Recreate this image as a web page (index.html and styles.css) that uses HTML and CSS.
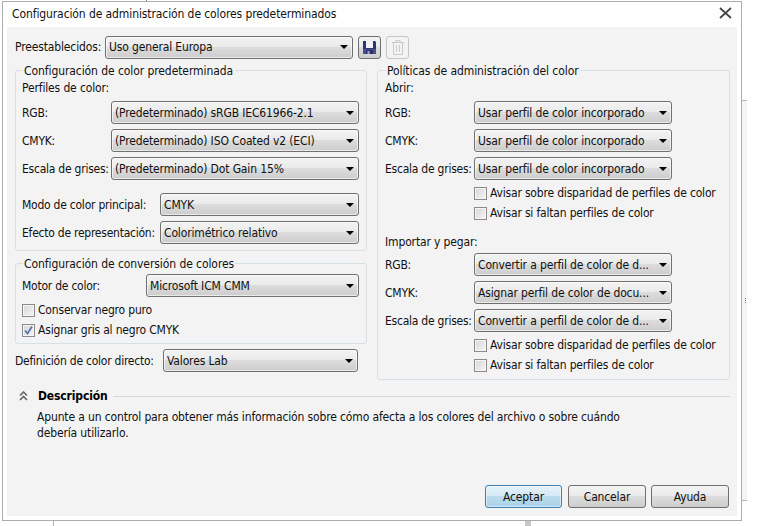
FILE: index.html
```html
<!DOCTYPE html>
<html lang="es">
<head>
<meta charset="utf-8">
<title>Configuración de administración de colores predeterminados</title>
<link rel="stylesheet" href="styles.css">
</head>
<body>
<div class="bg-tick bg-tick-a"></div>
<div class="bg-tick bg-tick-b"></div>
<div class="bg-tick bg-tick-c"></div>
<div class="bg-side"></div>
<div class="bg-dots"></div>
<div class="dialog">
  <div class="titlebar">
    <span class="title">Configuración de administración de colores predeterminados</span>
    <svg class="close" width="13" height="12" viewBox="0 0 13 12"><path d="M1 1l11 10M12 1L1 11" stroke="#444" stroke-width="1.700" fill="none"/></svg>
  </div>
  <div class="panel">
    <div class="preset-row">
      <span class="lbl-preset">Preestablecidos:</span>
      <div class="select select-preset"><span>Uso general Europa</span><i class="arrow"></i></div>
      <div class="tool tool-save">
        <svg width="13" height="13" viewBox="0 0 13 13"><path d="M0 0h12l1 1v12H0z" fill="#2d3572"/><path d="M0 8h13v5H0z" fill="#4a4f8a"/><path d="M3 0h7v7H3z" fill="#f2f3f8"/><path d="M3 9h7v4H3z" fill="#2a3068"/><path d="M4.500 10h2v3h-2z" fill="#a8abc8"/></svg>
      </div>
      <div class="tool tool-trash">
        <svg width="12" height="15" viewBox="0 0 12 15" fill="none" stroke="#c6caca"><path d="M0 2.500h12M4 2V.5h4V2"/><path d="M1.500 2.500v12h9v-12"/><path d="M4.500 5v7M7.500 5v7"/></svg>
      </div>
    </div>
    <div class="columns">
      <div class="col-left">
        <section class="group group-default">
          <div class="legend">Configuración de color predeterminada</div>
          <div class="sub">Perfiles de color:</div>
          <div class="row"><span class="lbl lbl-89">RGB:</span><div class="select"><span>(Predeterminado) sRGB IEC61966-2.1</span><i class="arrow"></i></div></div>
          <div class="row"><span class="lbl lbl-89">CMYK:</span><div class="select"><span>(Predeterminado) ISO Coated v2 (ECI)</span><i class="arrow"></i></div></div>
          <div class="row"><span class="lbl lbl-89">Escala de grises:</span><div class="select"><span>(Predeterminado) Dot Gain 15%</span><i class="arrow"></i></div></div>
          <div class="row row-spaced"><span class="lbl lbl-138">Modo de color principal:</span><div class="select"><span>CMYK</span><i class="arrow"></i></div></div>
          <div class="row"><span class="lbl lbl-138">Efecto de representación:</span><div class="select"><span>Colorimétrico relativo</span><i class="arrow"></i></div></div>
        </section>
        <section class="group group-convert">
          <div class="legend">Configuración de conversión de colores</div>
          <div class="row row-motor"><span class="lbl lbl-124">Motor de color:</span><div class="select"><span>Microsoft ICM CMM</span><i class="arrow"></i></div></div>
          <label class="check"><i class="box"></i>Conservar negro puro</label>
          <label class="check"><i class="box"><svg width="11" height="11" viewBox="0 0 11 11"><path d="M2 5.500l2.500 3L9 1.500" fill="none" stroke="#5b72b4" stroke-width="1.800"/></svg></i>Asignar gris al negro CMYK</label>
        </section>
        <div class="row row-spot"><span class="lbl lbl-148">Definición de color directo:</span><div class="select"><span>Valores Lab</span><i class="arrow"></i></div></div>
      </div>
      <section class="group col-right">
        <div class="legend">Políticas de administración del color</div>
        <div class="sub">Abrir:</div>
        <div class="row"><span class="lbl lbl-89">RGB:</span><div class="select select-198"><span>Usar perfil de color incorporado</span><i class="arrow"></i></div></div>
        <div class="row"><span class="lbl lbl-89">CMYK:</span><div class="select select-198"><span>Usar perfil de color incorporado</span><i class="arrow"></i></div></div>
        <div class="row"><span class="lbl lbl-89">Escala de grises:</span><div class="select select-198"><span>Usar perfil de color incorporado</span><i class="arrow"></i></div></div>
        <label class="check check-indent check-first"><i class="box"></i>Avisar sobre disparidad de perfiles de color</label>
        <label class="check check-indent"><i class="box"></i>Avisar si faltan perfiles de color</label>
        <div class="sub sub-import">Importar y pegar:</div>
        <div class="row"><span class="lbl lbl-89">RGB:</span><div class="select select-198"><span>Convertir a perfil de color de d...</span><i class="arrow"></i></div></div>
        <div class="row"><span class="lbl lbl-89">CMYK:</span><div class="select select-198"><span>Asignar perfil de color de docu...</span><i class="arrow"></i></div></div>
        <div class="row"><span class="lbl lbl-89">Escala de grises:</span><div class="select select-198"><span>Convertir a perfil de color de d...</span><i class="arrow"></i></div></div>
        <label class="check check-indent check-first"><i class="box"></i>Avisar sobre disparidad de perfiles de color</label>
        <label class="check check-indent"><i class="box"></i>Avisar si faltan perfiles de color</label>
      </section>
    </div>
    <div class="desc-head">
      <svg class="chev" width="9" height="10" viewBox="0 0 9 10" fill="none" stroke="#666" stroke-width="1.600"><path d="M1 4.500l3.500-3.500 3.500 3.500M1 9l3.500-3.500L8 9"/></svg>
      <strong class="desc-title">Descripción</strong>
      <span class="desc-line"></span>
    </div>
    <p class="desc-text">Apunte a un control para obtener más información sobre cómo afecta a los colores del archivo o sobre cuándo<br>debería utilizarlo.</p>
    <div class="actions">
      <div class="btn btn-default">Aceptar</div>
      <div class="btn btn-cancel">Cancelar</div>
      <div class="btn btn-help">Ayuda</div>
    </div>
  </div>
</div>
</body>
</html>
```

FILE: styles.css
```css
* { box-sizing: border-box; }
html, body { margin: 0; padding: 0; }
body {
  width: 757px;
  height: 526px;
  background: #fff;
  overflow: hidden;
  position: relative;
  font-family: "DejaVu Sans", sans-serif;
  font-stretch: condensed;
  font-size: 12px;
  letter-spacing: -0.14px;
  color: #111;
}
.bg-tick { position: absolute; background: #b4b4b4; }
.bg-tick-a { left: 146px; top: 0; width: 1px; height: 2px; background: #9a7a9a; }
.bg-tick-b { left: 53px; top: 521px; width: 1px; height: 5px; }
.bg-tick-c { left: 525px; top: 521px; width: 6px; height: 5px; background: #c8c8c8; }
.bg-side {
  position: absolute; left: 742px; top: 100px; width: 5px; height: 401px;
  background: #f4f4f4; border-top: 1px solid #b4b4b4; border-bottom: 1px solid #b4b4b4;
}
.bg-dots {
  position: absolute; left: 745px; top: 298px; width: 1px; height: 6px;
  background: repeating-linear-gradient(#777 0 1px, transparent 1px 2px);
}
.dialog {
  position: absolute; left: 2px; top: 1px; width: 740px; height: 520px;
  background: #fff; border: 1px solid #adadad;
  display: flex; flex-direction: column;
}
.titlebar {
  height: 25px; flex: none;
  display: flex; align-items: flex-start; justify-content: space-between;
  padding: 5px 9px 0 9px;
}
.title { letter-spacing: -0.1px; }
.close { margin-top: 0; }
.panel {
  flex: none; width: 730px; height: 489px; margin-left: 4px;
  background: #f3f3f3; padding: 9px 8px 0 8px;
  display: flex; flex-direction: column;
}
.preset-row { display: flex; align-items: center; height: 22px; }
.lbl-preset { width: 90px; flex: none; }
.select {
  flex: 1; min-width: 0; height: 23px;
  display: flex; align-items: center; justify-content: space-between;
  padding: 0 4px 0 3px;
  border: 1px solid #707070; border-radius: 3px;
  background: linear-gradient(#f3f3f3 0, #ebebeb 45%, #dcdcdc 50%, #cdcdcd 100%);
  box-shadow: inset 0 0 0 1px rgba(255,255,255,.6);
  white-space: nowrap;
}
.select-preset { flex: none; width: 248px; }
.select-198 { flex: none; width: 198px; }
.arrow {
  width: 0; height: 0; flex: none;
  border-left: 4px solid transparent; border-right: 4px solid transparent;
  border-top: 4px solid #000;
}
.tool {
  flex: none; width: 23px; height: 23px; margin-left: 5px;
  display: flex; align-items: center; justify-content: center;
  border-radius: 3px;
}
.tool-save {
  border: 1px solid #707070;
  background: linear-gradient(#f3f3f3 0, #ebebeb 45%, #dcdcdc 50%, #cdcdcd 100%);
}
.tool-trash { border: 1px solid #c6c6c6; background: #f3f3f3; }
.columns { display: flex; gap: 10px; margin-top: 12px; align-items: flex-start; }
.col-left { width: 352px; flex: none; }
.group {
  border: 1px solid #d7e0e7; border-radius: 3px;
  padding: 0 7px 6px 6px;
}
.col-right { width: 353px; height: 310px; flex: none; padding: 0 7px 0 7px; }
.group-default { height: 181px; }
.group-convert { margin-top: 12px; height: 81px; }
.legend {
  width: fit-content; height: 16px; line-height: 16px;
  margin: -8px 0 0 1px; padding: 0 1px;
  background: #f3f3f3;
  letter-spacing: -0.08px;
}
.sub { height: 18px; line-height: 18px; margin-bottom: 4px; }
.sub-import { margin-top: 10px; margin-bottom: 2px; }
.row { display: flex; align-items: center; height: 23px; margin-bottom: 5px; }
.row-spaced { margin-top: 13px; }
.row-motor { margin-top: 2px; margin-bottom: 3px; }
.row-spot { margin: 5px 9px 0 0; }
.lbl { flex: none; white-space: nowrap; letter-spacing: -0.24px; }
.lbl-89 { width: 89px; }
.lbl-138 { width: 138px; }
.lbl-124 { width: 124px; }
.lbl-148 { width: 148px; }
.check {
  display: flex; align-items: center; height: 20px; white-space: nowrap;
  letter-spacing: -0.18px;
}
.box {
  flex: none; width: 13px; height: 13px; margin-right: 3px;
  border: 1px solid #8a8a8a;
  background: linear-gradient(135deg, #d8d8d8, #f4f4f4);
  box-shadow: inset 0 0 0 1px #f6f6f6;
  display: flex; align-items: center; justify-content: center;
}
.check-indent { margin-left: 89px; }
.check-first { margin-top: -2px; }
.desc-head { display: flex; align-items: center; height: 18px; margin-top: 7px; padding-left: 4px; margin-right: -1px; }
.chev { flex: none; margin-right: 10px; }
.desc-title { font-weight: 700; color: #000; }
.desc-line { flex: 1; height: 1px; background: #d9d9d9; margin-left: 5px; }
.desc-text { margin: 4px 0 0 22px; line-height: 16px; }
.actions { display: flex; justify-content: flex-end; gap: 5px; margin-top: 44px; }
.btn {
  height: 23px; width: 78px;
  display: flex; align-items: center; justify-content: center;
  border: 1px solid #707070; border-radius: 3px;
  background: linear-gradient(#f3f3f3 0, #ebebeb 45%, #dcdcdc 50%, #cdcdcd 100%);
}
.btn-default {
  width: 77px; margin-right: 1px;
  border-color: #3c7fb1;
  background: linear-gradient(#e6f2f9 0, #d5e9f5 45%, #bcdcee 50%, #a9d0e6 100%);
  box-shadow: inset 0 0 0 1px rgba(255,255,255,.5);
}
```
